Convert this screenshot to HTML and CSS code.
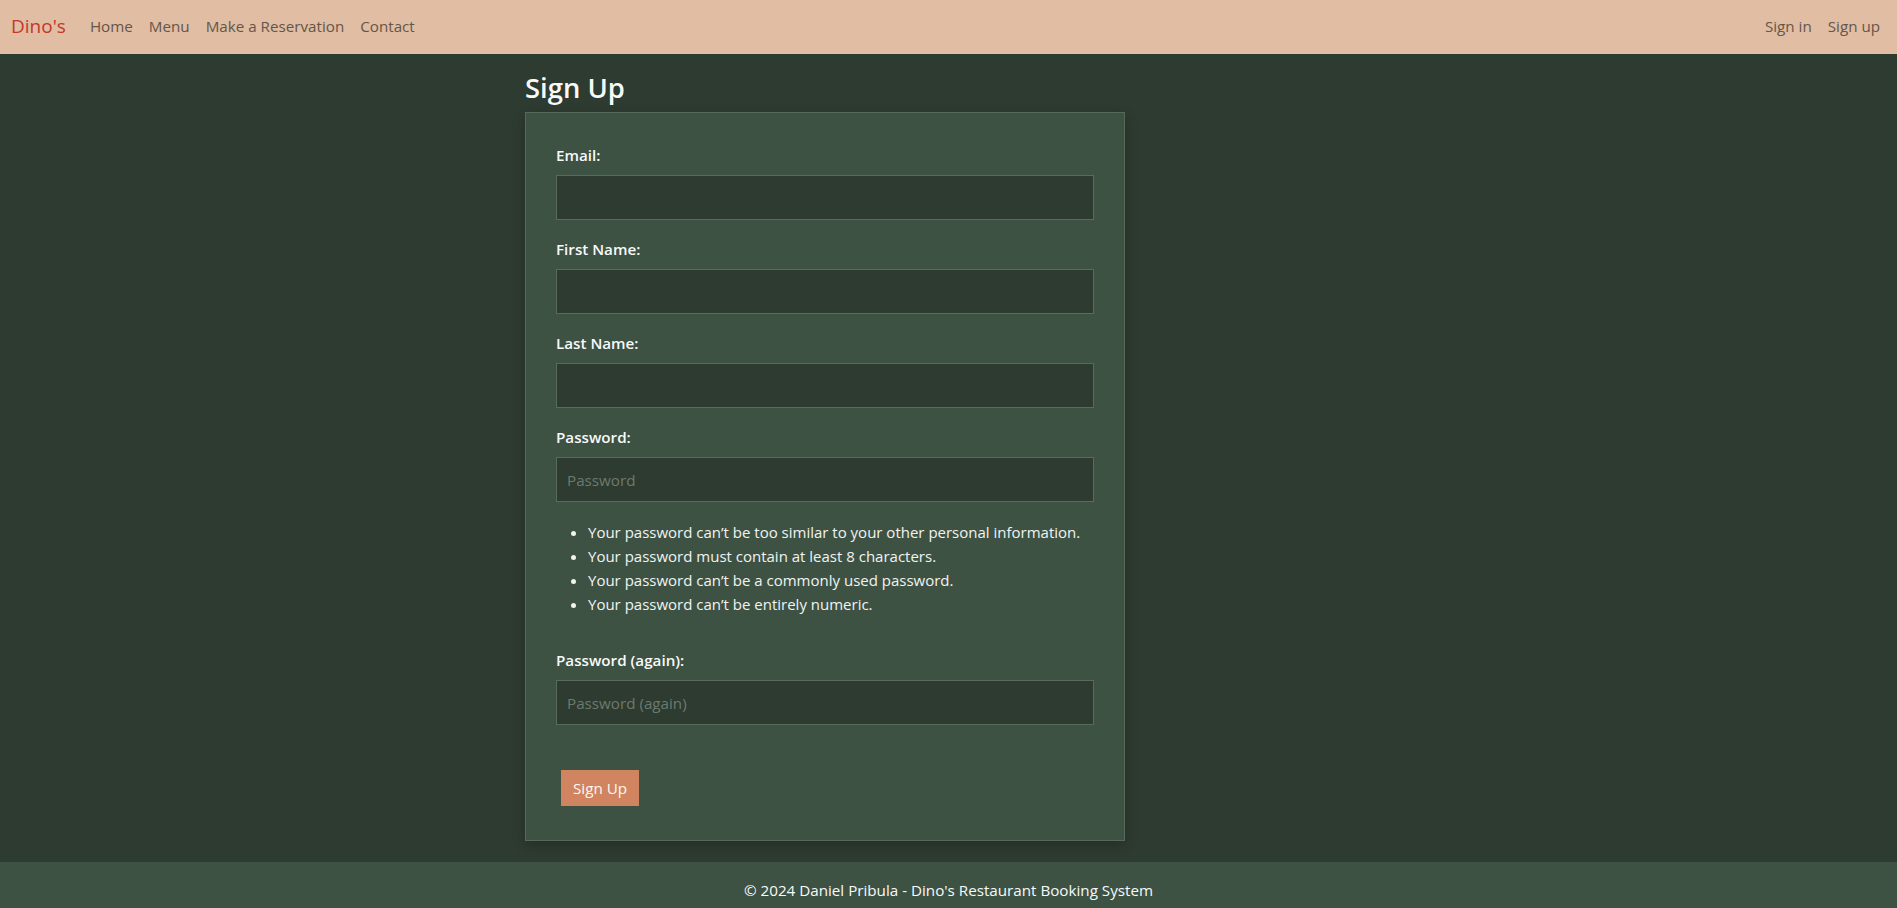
FILE: index.html
```html
<!DOCTYPE html>
<html lang="en">
<head>
<meta charset="utf-8">
<title>Sign Up - Dino's</title>
<link rel="stylesheet" href="styles.css">
</head>
<body>
<nav class="navbar">
  <a class="brand" href="#">Dino's</a>
  <ul class="nav-links">
    <li><a href="#">Home</a></li>
    <li><a href="#">Menu</a></li>
    <li><a href="#">Make a Reservation</a></li>
    <li><a href="#">Contact</a></li>
  </ul>
  <ul class="nav-links nav-right">
    <li><a href="#">Sign in</a></li>
    <li><a href="#">Sign up</a></li>
  </ul>
</nav>

<main class="container">
  <div class="col">
    <h2 class="title">Sign Up</h2>
    <div class="card">
      <form class="form">
        <div class="field">
          <label class="label">Email:</label>
          <input class="input" type="email">
        </div>
        <div class="field">
          <label class="label">First Name:</label>
          <input class="input" type="text">
        </div>
        <div class="field">
          <label class="label">Last Name:</label>
          <input class="input" type="text">
        </div>
        <div class="field">
          <label class="label">Password:</label>
          <input class="input" type="password" placeholder="Password">
          <ul class="help">
            <li>Your password can’t be too similar to your other personal information.</li>
            <li>Your password must contain at least 8 characters.</li>
            <li>Your password can’t be a commonly used password.</li>
            <li>Your password can’t be entirely numeric.</li>
          </ul>
        </div>
        <div class="field">
          <label class="label">Password (again):</label>
          <input class="input" type="password" placeholder="Password (again)">
        </div>
        <div class="actions">
          <button class="btn" type="button">Sign Up</button>
        </div>
      </form>
    </div>
  </div>
</main>

<footer class="footer">
  <p>© 2024 Daniel Pribula - Dino's Restaurant Booking System</p>
</footer>
</body>
</html>
```
FILE: styles.css
```css
* { box-sizing: border-box; }

html, body {
  margin: 0;
  padding: 0;
}

body {
  background: #2e3b30;
  color: #f5f5f5;
  font-family: "Open Sans", "Noto Sans", sans-serif;
  font-size: 15.2px;
  line-height: 24px;
}

/* Navbar */
.navbar {
  display: flex;
  align-items: center;
  height: 54px;
  padding: 0 9px 2px 11px;
  background: #e0bda3;
}

.brand {
  font-size: 19px;
  color: #c4372b;
  text-decoration: none;
  margin-right: 16px;
  line-height: 30px;
}

.nav-links {
  display: flex;
  list-style: none;
  margin: 0;
  padding: 0;
}

.nav-links a {
  display: block;
  padding: 8px;
  color: #65564a;
  text-decoration: none;
}

.nav-right {
  margin-left: auto;
}

/* Main */
.container {
  max-width: 1320px;
  margin: 0 auto;
  padding: 0 12px 21px;
}

.col {
  width: 600px;
  margin-left: 224.5px;
}

.title {
  margin: 18px 0 8px;
  font-size: 27.4px;
  line-height: 32px;
  font-weight: 600;
  color: #f8f9fa;
}

.card {
  background: #3d5243;
  border: 1px solid #56695a;
  padding: 30px;
  box-shadow: 0 4px 12px rgba(0, 0, 0, 0.22);
}

.form {
  margin: 0;
}

.field {
  margin-bottom: 17px;
}

.label {
  display: block;
  margin-bottom: 8px;
  font-weight: 600;
  color: #f8f9fa;
}

.input {
  display: block;
  width: 100%;
  height: 45px;
  padding: 0 10px;
  background: #2e3b30;
  border: 1px solid #586b5c;
  border-radius: 0;
  color: #f5f5f5;
  font-family: inherit;
  font-size: 15.2px;
  outline: none;
}

.input::placeholder {
  color: #6c7a6e;
}

.help {
  margin: 18px 0 32px;
  padding-left: 32px;
  font-size: 15px;
  color: #f2f2f2;
}

.actions {
  margin-top: 45px;
  padding: 0 0 4px 5px;
}

.btn {
  display: inline-block;
  height: 36px;
  padding: 0 12px;
  background: #d0845f;
  border: 0;
  border-radius: 0;
  color: #fff8f2;
  font-family: inherit;
  font-size: 15.2px;
  line-height: 36px;
  cursor: pointer;
}

/* Footer */
.footer {
  background: #3d5243;
  padding: 16px 0;
  text-align: center;
}

.footer p {
  margin: 0;
  color: #f8f9fa;
}
```
